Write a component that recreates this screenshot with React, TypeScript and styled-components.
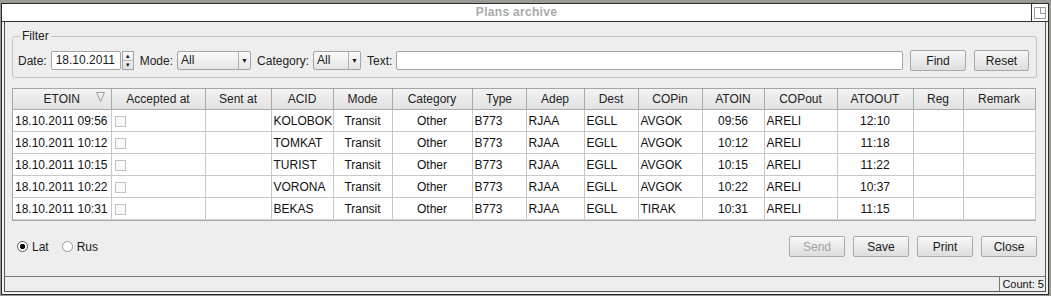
import React from 'react';
import styled, { createGlobalStyle } from 'styled-components';

const GlobalStyle = createGlobalStyle`
  html, body {
    margin: 0;
    padding: 0;
    background: #8f8f8f;
    font-family: "Liberation Sans", Arial, sans-serif;
    font-size: 12px;
    color: #1a1a1a;
  }
`;

const Desk = styled.div`
  width: 1051px;
  height: 296px;
  padding: 3px 2px 1px 1px;
  box-sizing: border-box;
  background: #9a9a94;
`;

const Window = styled.div`
  height: 292px;
  box-sizing: border-box;
  border: 1px solid #2b2b2b;
  background: #f2f2f2;
  display: flex;
  flex-direction: column;
  padding-bottom: 2px;
`;

const TitleBar = styled.div`
  height: 17px;
  display: flex;
  background: #fff;
  border-bottom: 1px solid #333;
`;

const Title = styled.div`
  flex: 1;
  text-align: center;
  font-weight: bold;
  font-size: 12px;
  letter-spacing: 0.3px;
  line-height: 17px;
  color: #a9a9a9;
`;

const DockCell = styled.div`
  width: 16px;
  border-left: 1px solid #333;
  display: flex;
  align-items: center;
  justify-content: center;
`;

const Body = styled.div`
  flex: 1;
  margin: 0 2px 0 2px;
  border: 1px solid #555;
  border-top: none;
  background: #eeeeee;
  display: flex;
  flex-direction: column;
`;

const Main = styled.div`
  flex: 1;
  padding: 7px 8px 0 7px;
  display: flex;
  flex-direction: column;
`;

const Filter = styled.fieldset`
  margin: 0;
  display: block;
  border: 1px solid #c2c2c2;
  border-radius: 3px;
  padding: 7px 7px 6px 5px;

  legend {
    padding: 0 2px;
    margin-left: 2px;
    font-size: 12px;
    line-height: 14px;
    color: #222;
  }
`;

const FilterRow = styled.div`
  height: 21px;
  display: flex;
  align-items: center;
  gap: 4px;
`;

const Label = styled.span<{ gap?: number }>`
  font-size: 12px;
  color: #222;
  margin-left: ${(p) => p.gap ?? 0}px;
`;

const Field = styled.div<{ w?: number; grow?: boolean }>`
  height: 19px;
  box-sizing: border-box;
  ${(p) => (p.grow ? 'flex: 1;' : `width: ${p.w}px;`)}
  background: #fff;
  border: 1px solid #a4a4a4;
  border-radius: 2px;
  padding-left: 4px;
  line-height: 17px;
  font-size: 12px;
`;

const Spin = styled.div`
  width: 12px;
  height: 19px;
  margin-left: -3px;
  display: flex;
  flex-direction: column;
  border: 1px solid #a4a4a4;
  box-sizing: border-box;
  background: linear-gradient(#fafafa, #e2e2e2);

  span {
    flex: 1;
    display: flex;
    align-items: center;
    justify-content: center;
    font-size: 6px;
    line-height: 1;
  }
  span + span {
    border-top: 1px solid #b8b8b8;
  }
`;

const Select = styled.div<{ w: number }>`
  width: ${(p) => p.w}px;
  height: 19px;
  box-sizing: border-box;
  display: flex;
  border: 1px solid #a4a4a4;
  border-radius: 2px;
  background: linear-gradient(#fbfbfb, #e4e4e4);
  font-size: 12px;

  span {
    flex: 1;
    padding-left: 3px;
    line-height: 17px;
  }
  i {
    width: 11px;
    border-left: 1px solid #b0b0b0;
    display: flex;
    align-items: center;
    justify-content: center;
    font-style: normal;
    font-size: 7px;
  }
`;

const Button = styled.button<{ w: number; disabled?: boolean }>`
  width: ${(p) => p.w}px;
  height: 21px;
  padding: 0;
  border: 1px solid #a9a9a9;
  border-radius: 2px;
  background: linear-gradient(#f8f8f8, #dedede);
  font-family: "Liberation Sans", Arial, sans-serif;
  font-size: 12px;
  color: ${(p) => (p.disabled ? '#a3a3a3' : '#1a1a1a')};
`;

const TableBox = styled.div`
  margin-top: 10px;
  border: 1px solid #a6a6a6;
  background: #fff;
  width: 1024px;
  box-sizing: border-box;
`;

const Grid = styled.table`
  border-collapse: collapse;
  table-layout: fixed;
  width: 1022px;
  font-size: 12px;

  th {
    height: 20px;
    padding: 0;
    font-weight: normal;
    background: linear-gradient(#f3f3f3, #e2e2e2);
    border-right: 1px solid #a9a9a9;
    border-bottom: 1px solid #a9a9a9;
    color: #222;
    position: relative;
  }
  td {
    height: 21px;
    padding: 0 0 0 2px;
    border-right: 1px solid #c8c8c8;
    border-bottom: 1px solid #c8c8c8;
    white-space: nowrap;
    overflow: hidden;
    color: #111;
  }
  td.c {
    text-align: center;
    padding: 0;
  }
  tr:last-child td {
    border-bottom: 1px solid #d4d4d4;
  }
`;

const SortMark = styled.svg`
  position: absolute;
  right: 6px;
  top: 3px;
`;

const Check = styled.span`
  display: inline-block;
  width: 9px;
  height: 9px;
  border: 1px solid #c2c2c2;
  background: #fafafa;
  vertical-align: middle;
  margin-left: 1px;
`;

const Footer = styled.div`
  margin-top: 15px;
  display: flex;
  align-items: center;
  gap: 8px;
`;

const Radio = styled.label`
  display: flex;
  align-items: center;
  gap: 4px;
  margin-left: 5px;
  font-size: 12px;
`;

const Dot = styled.span<{ on?: boolean }>`
  width: 9px;
  height: 9px;
  border-radius: 50%;
  border: 1px solid ${(p) => (p.on ? '#555' : '#9a9a9a')};
  background: ${(p) =>
    p.on ? 'radial-gradient(circle, #111 0 2.5px, #fff 3px)' : '#fff'};
`;

const Spacer = styled.div`
  flex: 1;
`;

const StatusBar = styled.div`
  height: 14px;
  border-top: 1px solid #777;
  display: flex;
  justify-content: flex-end;
`;

const Count = styled.div`
  border-left: 1px solid #777;
  padding: 0 1px 0 2px;
  font-size: 11px;
  line-height: 14px;
  white-space: nowrap;
  color: #111;
`;

type Col = { name: string; w: number };

const cols: Col[] = [
  { name: 'ETOIN', w: 98 },
  { name: 'Accepted at', w: 94 },
  { name: 'Sent at', w: 66 },
  { name: 'ACID', w: 62 },
  { name: 'Mode', w: 59 },
  { name: 'Category', w: 80 },
  { name: 'Type', w: 54 },
  { name: 'Adep', w: 58 },
  { name: 'Dest', w: 54 },
  { name: 'COPin', w: 64 },
  { name: 'ATOIN', w: 62 },
  { name: 'COPout', w: 73 },
  { name: 'ATOOUT', w: 76 },
  { name: 'Reg', w: 50 },
  { name: 'Remark', w: 72 },
];

const plans = [
  ['18.10.2011 09:56', 'KOLOBOK', 'AVGOK', '09:56', '12:10'],
  ['18.10.2011 10:12', 'TOMKAT', 'AVGOK', '10:12', '11:18'],
  ['18.10.2011 10:15', 'TURIST', 'AVGOK', '10:15', '11:22'],
  ['18.10.2011 10:22', 'VORONA', 'AVGOK', '10:22', '10:37'],
  ['18.10.2011 10:31', 'BEKAS', 'TIRAK', '10:31', '11:15'],
];

const App = () => (
  <Desk>
    <GlobalStyle />
    <Window>
      <TitleBar>
        <Title>Plans archive</Title>
        <DockCell>
          <svg width="12" height="12" viewBox="0 0 12 12">
            <rect x="0.5" y="0.5" width="11" height="11" fill="none" stroke="#9a9a9a" />
            <path d="M6.5 0.5V6.5H11.5" fill="none" stroke="#9a9a9a" />
          </svg>
        </DockCell>
      </TitleBar>
      <Body>
        <Main>
          <Filter>
            <legend>Filter</legend>
            <FilterRow>
              <Label>Date:</Label>
              <Field w={70}>18.10.2011</Field>
              <Spin>
                <span>▲</span>
                <span>▼</span>
              </Spin>
              <Label gap={2}>Mode:</Label>
              <Select w={74}>
                <span>All</span>
                <i>▼</i>
              </Select>
              <Label gap={2}>Category:</Label>
              <Select w={48}>
                <span>All</span>
                <i>▼</i>
              </Select>
              <Label gap={2}>Text:</Label>
              <Field grow />
              <Button w={56} style={{ marginLeft: 3 }}>Find</Button>
              <Button w={55} style={{ marginLeft: 4 }}>Reset</Button>
            </FilterRow>
          </Filter>

          <TableBox>
            <Grid>
              <colgroup>
                {cols.map((c) => (
                  <col key={c.name} style={{ width: c.w }} />
                ))}
              </colgroup>
              <thead>
                <tr>
                  {cols.map((c, i) => (
                    <th key={c.name}>
                      {c.name}
                      {i === 0 && (
                        <SortMark width="9" height="10" viewBox="0 0 9 10">
                          <path d="M0.5 0.5H8.5L4.5 9.5Z" fill="none" stroke="#9c9c9c" />
                        </SortMark>
                      )}
                    </th>
                  ))}
                </tr>
              </thead>
              <tbody>
                {plans.map(([etoin, acid, copin, atoin, atoout]) => (
                  <tr key={acid}>
                    <td>{etoin}</td>
                    <td>
                      <Check />
                    </td>
                    <td />
                    <td>{acid}</td>
                    <td className="c">Transit</td>
                    <td className="c">Other</td>
                    <td>B773</td>
                    <td>RJAA</td>
                    <td>EGLL</td>
                    <td>{copin}</td>
                    <td className="c">{atoin}</td>
                    <td>ARELI</td>
                    <td className="c">{atoout}</td>
                    <td />
                    <td />
                  </tr>
                ))}
              </tbody>
            </Grid>
          </TableBox>

          <Footer>
            <Radio>
              <Dot on />
              Lat
            </Radio>
            <Radio>
              <Dot />
              Rus
            </Radio>
            <Spacer />
            <Button w={56} disabled>Send</Button>
            <Button w={56}>Save</Button>
            <Button w={56}>Print</Button>
            <Button w={56}>Close</Button>
          </Footer>
        </Main>
        <StatusBar>
          <Count>Count: 5</Count>
        </StatusBar>
      </Body>
    </Window>
  </Desk>
);

export default App;
